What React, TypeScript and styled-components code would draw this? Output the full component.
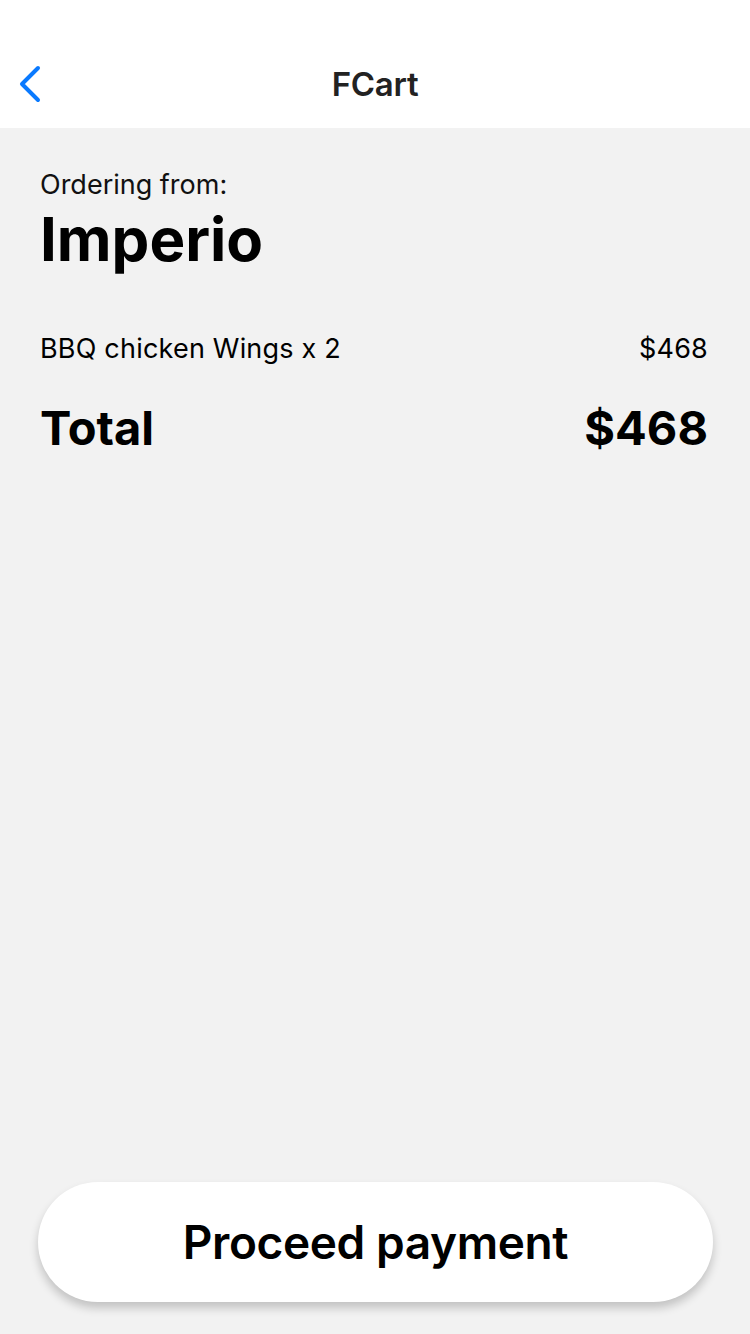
import React from "react";
import styled, { createGlobalStyle } from "styled-components";

const Global = createGlobalStyle`
  html, body { margin: 0; padding: 0; background: #f2f2f2; }
  body { font-family: Inter, "Noto Sans", sans-serif; -webkit-font-smoothing: antialiased; }
  * { box-sizing: border-box; }
`;

const Screen = styled.div`
  width: 750px;
  height: 1334px;
  display: flex;
  flex-direction: column;
  background: #f2f2f2;
`;

const NavBar = styled.header`
  height: 128px;
  background: #ffffff;
  display: grid;
  grid-template-columns: 100px 1fr 100px;
  align-items: center;
  padding-top: 40px;
`;

const BackButton = styled.button`
  border: none;
  background: none;
  padding: 0 0 0 16px;
  display: flex;
  align-items: center;
  height: 44px;
  cursor: pointer;
`;

const NavTitle = styled.h1`
  margin: 0;
  text-align: center;
  font-size: 33px;
  font-weight: 600;
  color: #222222;
  letter-spacing: -0.3px;
`;

const Body = styled.main`
  flex: 1;
  display: flex;
  flex-direction: column;
  padding: 42px 42px 32px 40px;
`;

const Label = styled.div`
  font-size: 27px;
  color: #111;
  line-height: 30px;
`;

const Restaurant = styled.div`
  font-size: 60px;
  font-weight: 700;
  color: #000;
  line-height: 70px;
  margin-top: 4px;
  margin-bottom: 58px;
`;

const Row = styled.div<{ $total?: boolean }>`
  display: flex;
  justify-content: space-between;
  align-items: baseline;
  font-size: ${(p) => (p.$total ? "47px" : "27px")};
  font-weight: ${(p) => (p.$total ? 700 : 400)};
  color: #000;
  margin-bottom: ${(p) => (p.$total ? "0" : "34px")};
  letter-spacing: ${(p) => (p.$total ? "0" : "0.2px")};
`;

const Spacer = styled.div`
  flex: 1;
`;

const PayButton = styled.button`
  margin-left: -2px;
  margin-right: -5px;
  height: 120px;
  border: none;
  border-radius: 60px;
  background: #ffffff;
  box-shadow: 0 6px 10px rgba(0, 0, 0, 0.2);
  font-family: Inter, "Noto Sans", sans-serif;
  font-size: 46px;
  font-weight: 600;
  color: #000;
  letter-spacing: -0.4px;
  cursor: pointer;
`;

export default function App() {
  return (
    <Screen>
      <Global />
      <NavBar>
        <BackButton aria-label="Back">
          <svg width="28" height="40" viewBox="0 0 28 40">
            <path
              d="M22 4 L6 20 L22 36"
              fill="none"
              stroke="#0a7aff"
              strokeWidth="4"
              strokeLinecap="round"
              strokeLinejoin="round"
            />
          </svg>
        </BackButton>
        <NavTitle>FCart</NavTitle>
        <div />
      </NavBar>
      <Body>
        <Label>Ordering from:</Label>
        <Restaurant>Imperio</Restaurant>
        <Row>
          <span>BBQ chicken Wings x 2</span>
          <span>$468</span>
        </Row>
        <Row $total>
          <span>Total</span>
          <span>$468</span>
        </Row>
        <Spacer />
        <PayButton>Proceed payment</PayButton>
      </Body>
    </Screen>
  );
}
